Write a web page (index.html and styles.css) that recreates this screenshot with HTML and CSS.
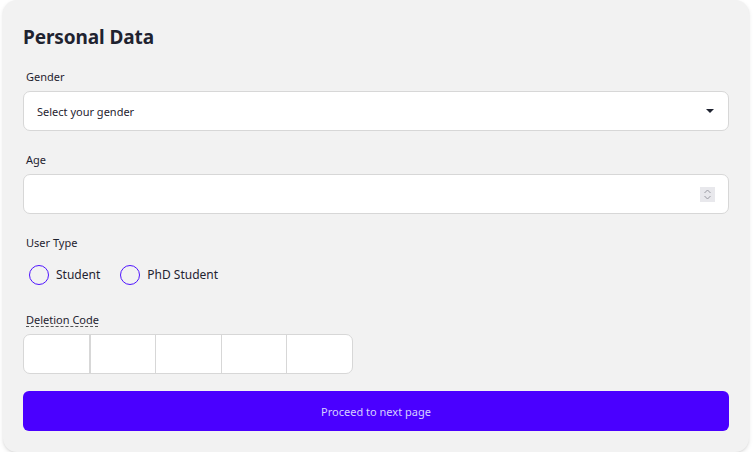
FILE: index.html
```html
<!DOCTYPE html>
<html>
<head>
<meta charset="utf-8">
<link rel="stylesheet" href="styles.css">
</head>
<body>
<div class="card">
  <h1 class="title">Personal Data</h1>
  <div class="field first">
    <label class="label">Gender</label>
    <div class="control select">
      <span>Select your gender</span>
      <svg class="caret" width="8" height="4" viewBox="0 0 8 4"><path d="M0 0h8L4 4z" fill="#1f2330"/></svg>
    </div>
  </div>
  <div class="field">
    <label class="label">Age</label>
    <div class="control number">
      <span class="spin">
        <svg width="15" height="15" viewBox="0 0 15 15"><path d="M4.5 6L7.5 3L10.5 6M4.5 9L7.5 12L10.5 9" fill="none" stroke="#9a9aa2" stroke-width="1"/></svg>
      </span>
    </div>
  </div>
  <div class="field">
    <label class="label">User Type</label>
    <div class="radios">
      <label class="radio"><span class="circle"></span>Student</label>
      <label class="radio"><span class="circle"></span>PhD Student</label>
    </div>
  </div>
  <div class="field code-field">
    <label class="label"><abbr class="abbr">Deletion Code</abbr></label>
    <div class="code">
      <span class="cell"></span><span class="cell"></span><span class="cell"></span><span class="cell"></span><span class="cell"></span>
    </div>
  </div>
  <button class="btn">Proceed to next page</button>
</div>
</body>
</html>
```
FILE: styles.css
```css
* { box-sizing: border-box; }
html, body { margin: 0; padding: 0; background: #fff; }
body {
  font-family: "Noto Sans", "Open Sans", sans-serif;
  color: #1f2330;
  padding: 0 4px 0 3px;
}
.card {
  background: #f2f2f2;
  border-radius: 14px;
  box-shadow: 0 2px 4px rgba(0,0,0,0.10), 0 1px 2px rgba(0,0,0,0.06);
  padding: 22px 20px 21px 20px;
  display: flex;
  flex-direction: column;
  height: 452px;
}
.card > * { flex-shrink: 0; }
.title {
  margin: 0;
  font-size: 19px;
  font-weight: 700;
  line-height: 30px;
  color: #1f2330;
  letter-spacing: -0.1px;
}
.field {
  display: flex;
  flex-direction: column;
}
.label {
  font-size: 11px;
  line-height: 16px;
  padding: 0 3px 6px;
  margin-top: 21px;
}
.field.first .label { margin-top: 17px; }
.control {
  height: 40px;
  background: #fff;
  border: 1px solid #d7d7d7;
  border-radius: 7px;
  display: flex;
  align-items: center;
  font-size: 11px;
  padding: 0 13px;
}
.select { justify-content: space-between; padding-right: 14px; }
.number { justify-content: flex-end; padding-right: 13px; }
.spin {
  width: 15px; height: 15px;
  background: #e8e8ec;
  display: flex;
}
.radios {
  display: flex;
  gap: 20px;
  padding: 8px 6px 0;
  align-items: flex-start;
}
.radio {
  display: flex;
  align-items: center;
  gap: 7px;
  font-size: 12px;
  line-height: 20px;
}
.circle {
  width: 20px; height: 20px;
  border: 1.5px solid #4f14ff;
  border-radius: 50%;
  background: transparent;
}
.code-field .label { margin-top: 27px; }
.abbr {
  text-decoration: underline dashed;
  text-decoration-color: #555;
  text-underline-offset: 2px;
}
.code {
  display: flex;
  width: 330px;
  height: 40px;
  background: #fff;
  border: 1px solid #d7d7d7;
  border-radius: 7px;
  overflow: hidden;
}
.cell {
  flex: 1;
  border-left: 1px solid #d7d7d7;
}
.cell:first-child { border-left: none; }
.cell:nth-child(2) { border-left-width: 2px; }
.btn {
  margin-top: 17px;
  height: 40px;
  border: none;
  border-radius: 6px;
  background: #4a00ff;
  color: #d6cfff;
  font-family: inherit;
  font-size: 11px;
}
```
